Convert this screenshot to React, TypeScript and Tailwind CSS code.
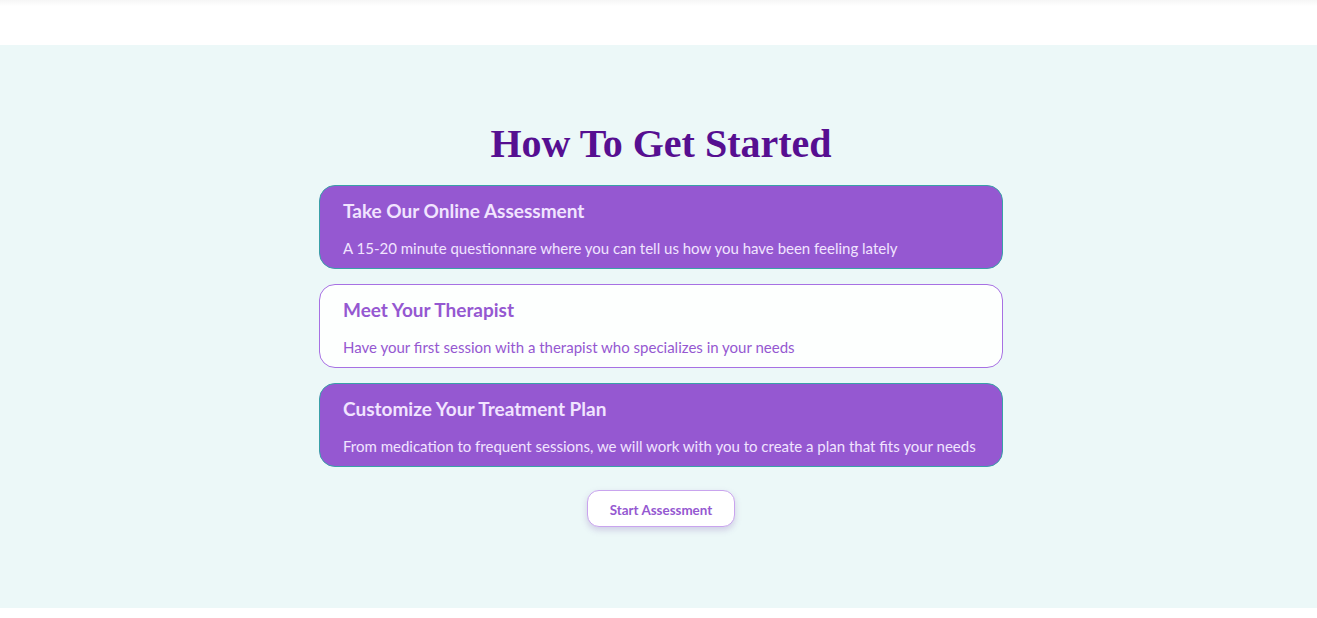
const steps = [
  {
    title: "Take Our Online Assessment",
    text: "A 15-20 minute questionnare where you can tell us how you have been feeling lately",
    filled: true,
  },
  {
    title: "Meet Your Therapist",
    text: "Have your first session with a therapist who specializes in your needs",
    filled: false,
  },
  {
    title: "Customize Your Treatment Plan",
    text: "From medication to frequent sessions, we will work with you to create a plan that fits your needs",
    filled: true,
  },
];

export default function App() {
  return (
    <div className="min-h-[618px] bg-white font-['Lato','Open_Sans',sans-serif]">
      <header className="h-[45px] bg-[linear-gradient(#f6f6f6,#ffffff_6px)]" />
      <section className="flex flex-col items-center bg-[#ecf8f8] pt-[77px] pb-[81px] pl-[5px]">
        <h1 className="font-['Liberation_Serif',serif] text-[40px] font-bold leading-[44px] text-[#560f91]">
          How To Get Started
        </h1>
        <div className="mt-[19px] flex w-[684px] flex-col gap-[15px]">
          {steps.map((step) => (
            <div
              key={step.title}
              className={`h-[84px] rounded-[16px] border px-[23px] pt-[13px] ${
                step.filled
                  ? "border-[#3aa0a8] bg-[#9558d1] text-[#f1e4ff]"
                  : "border-[#a771e3] bg-[#fdfffe] text-[#9558d1]"
              }`}
            >
              <h2 className="text-[19px] font-bold leading-[24px]">{step.title}</h2>
              <p className="mt-[15px] text-[15px] leading-[20px]">{step.text}</p>
            </div>
          ))}
        </div>
        <button
          type="button"
          className="mt-[23px] h-[37px] w-[148px] rounded-[12px] border border-[#c9a4ee] bg-white pt-[3px] text-[13.4px] font-bold text-[#9558d1] shadow-[0_3px_6px_rgba(120,80,170,0.25)]"
        >
          Start Assessment
        </button>
      </section>
    </div>
  );
}
